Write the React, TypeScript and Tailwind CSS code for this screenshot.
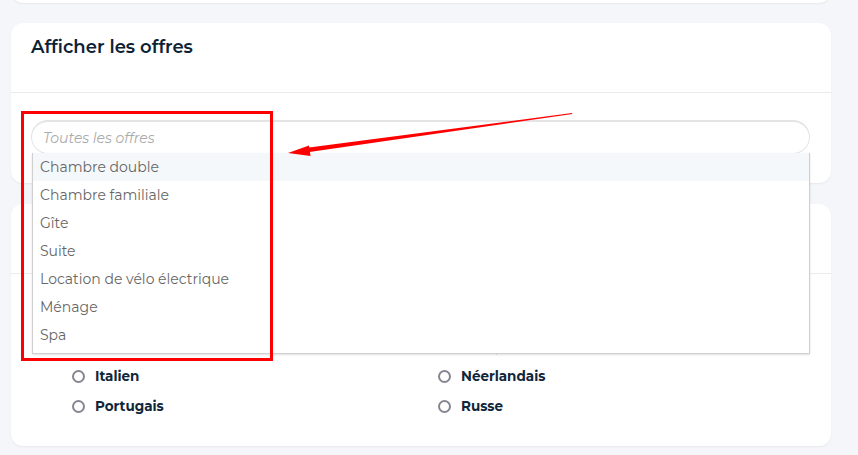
const font = { fontFamily: '"Montserrat", "Noto Sans", "Liberation Sans", sans-serif' };

const offers = [
  'Chambre double',
  'Chambre familiale',
  'Gîte',
  'Suite',
  'Location de vélo électrique',
  'Ménage',
  'Spa',
];

const languages = [
  ['Allemand', 'Anglais'],
  ['Espagnol', 'Français'],
  ['Italien', 'Néerlandais'],
  ['Portugais', 'Russe'],
];

function Radio({ label }: { label: string }) {
  return (
    <label className="flex items-center gap-[10px] h-[30px]">
      <span className="w-[13px] h-[13px] rounded-full border-2 border-[#868692] bg-white" />
      <span className="text-[13.5px] font-bold text-[#10263a]">{label}</span>
    </label>
  );
}

export default function App() {
  return (
    <div style={font} className="relative w-[858px] h-[455px] overflow-hidden bg-[#f5f6fa]">
      <div className="flex flex-col gap-[20px] px-[11px] pr-[27px]">
        {/* previous card, mostly scrolled out */}
        <div className="-mt-[21px] h-[24px] rounded-xl bg-white shadow-[0_1px_2px_rgba(0,0,0,0.06)]" />

        {/* Afficher les offres */}
        <div className="relative rounded-xl bg-white shadow-[0_1px_2px_rgba(0,0,0,0.06)]">
          <div className="h-[70px] border-b border-[#ebebef] px-[20px] pt-[11px]">
            <h2 className="text-[18px] font-semibold text-[#0d2235]">Afficher les offres</h2>
          </div>
          <div className="h-[90px] pt-[27px] pl-[20px] pr-[21px]">
            <div className="relative">
              <div className="h-[34px] rounded-full border border-[#e4e4e6] border-t-2 flex items-center px-[11px] pt-[1px]">
                <span className="text-[14px] italic text-[#ababab]">Toutes les offres</span>
              </div>
              <ul className="absolute z-10 left-[1px] right-[0px] top-[33px] bg-white border border-t-0 border-[#cfcfcf] shadow-[0_1px_2px_rgba(0,0,0,0.12)] pb-[4px]">
                {offers.map((o, i) => (
                  <li
                    key={o}
                    className={`h-[28px] flex items-center px-[7px] text-[14px] text-[#666] ${i === 0 ? 'bg-[#f4f8fb]' : ''}`}
                  >
                    {o}
                  </li>
                ))}
              </ul>
            </div>
          </div>
        </div>

        {/* Langues (header hidden under the open dropdown) */}
        <div className="mt-[1px] rounded-xl bg-white shadow-[0_1px_2px_rgba(0,0,0,0.06)]">
          <div className="h-[70px] border-b border-[#ebebef]" />
          <div className="grid grid-cols-[366px_1fr] pl-[61px] pt-[27px] pb-[25px]">
            {languages.map(([a, b]) => (
              <div key={a} className="contents">
                <Radio label={a} />
                <Radio label={b} />
              </div>
            ))}
          </div>
        </div>
      </div>

      {/* annotation */}
      <div className="absolute left-[21px] top-[111px] w-[252px] h-[250px] border-[3px] border-[#ff0000] z-20" />
      <svg className="absolute left-0 top-0 z-20" width="858" height="455" viewBox="0 0 858 455">
        <polygon points="572,113 572.3,114 306,152.5 305.2,148" fill="#ff0000" />
        <polygon points="288,153 309,145.5 310.5,156" fill="#ff0000" />
      </svg>
    </div>
  );
}
